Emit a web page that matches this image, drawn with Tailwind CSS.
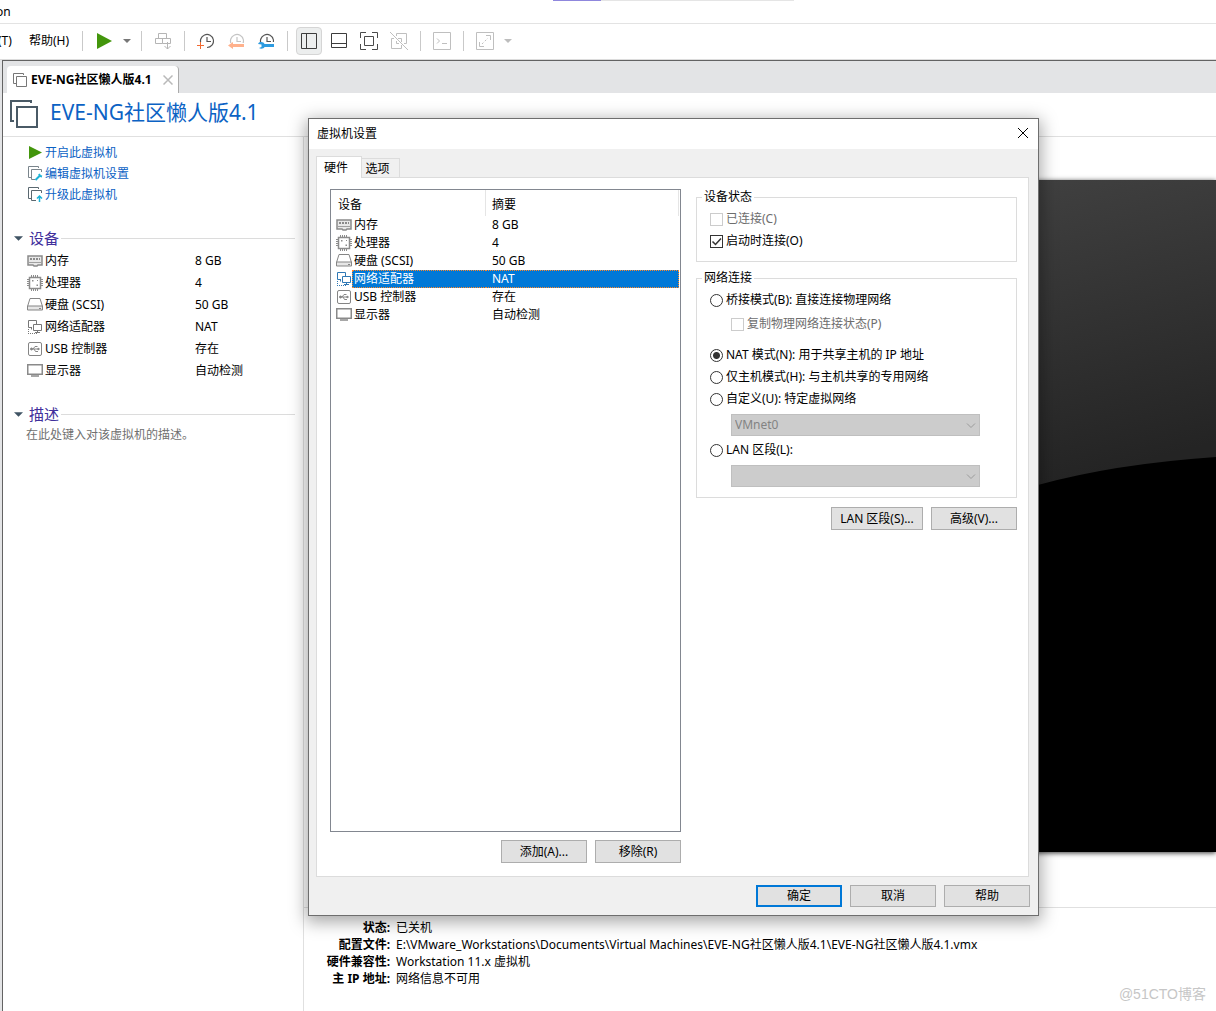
<!DOCTYPE html>
<html lang="zh-CN">
<head>
<meta charset="utf-8">
<title>虚拟机设置</title>
<script src="https://cdn.jsdelivr.net/npm/@tailwindcss/browser@4"></script>
</head>
<body class="bg-white font-['Noto_Sans','Noto_Sans_CJK_SC',sans-serif] text-[12px] leading-4 text-black">

<!-- Shared icons -->
<svg class="hidden" aria-hidden="true">
  <symbol id="memory" viewBox="0 0 16 16"><path d="M1 3h14v9h-4l-1 1H7l-1-1H1z" fill="#e8e8e8" stroke="#8a8a8a" stroke-width="1.5"/><path d="M3 5h2v2H3zM6 5h2v2H6zM9 5h2v2H9zM12 5h1v2h-1z" fill="#8a8a8a"/><path d="M2 9.500h12" stroke="#a0a0a0"/></symbol>
  <symbol id="cpu" viewBox="0 0 16 16"><path d="M4.500 0v16M6.500 0v16M8.500 0v16M10.500 0v16M0 4.500h16M0 6.500h16M0 8.500h16M0 10.500h16" stroke="#8c8c8c"/><rect x="2.500" y="2.500" width="11" height="11" fill="#fff" stroke="#8c8c8c" stroke-width="1.500"/><path d="M5 5h1.500v1.500H5zM9.500 9.500H11V11H9.500zM10 5h1v1h-1z" fill="#8c8c8c"/></symbol>
  <symbol id="disk" viewBox="0 0 16 16"><path d="M3 1.500h10l2.500 8v3H.5v-3z" fill="#fff" stroke="#858585"/><path d="M.5 9h15v4H.5z" fill="#e6e6e6" stroke="#858585"/><path d="M12 11.500h2" stroke="#858585"/></symbol>
  <symbol id="network" viewBox="0 0 16 16" fill="none" stroke="currentColor"><path d="M5 8.500H1.500v-7h8V5M4.500 10.500V8.500"/><path d="M6.500 5.500h8v6h-8zM10.500 11.500V13M8 13.500h5"/><path d="M1.500 10v5M1 14.500h9" stroke-dasharray="1 1"/></symbol>
  <symbol id="usb" viewBox="0 0 16 16" fill="none" stroke="#858585"><rect x="1.500" y="1.500" width="13" height="13" rx="1.500"/><path d="M4 8h8M6 8l2-2.500h2M7 8l1.500 2.500H10"/><circle cx="4.500" cy="8" r="1" fill="#858585"/><path d="M10.500 5.500h.5M10 10.500h1M11 7l1.500 1-1.500 1z"/></symbol>
  <symbol id="display" viewBox="0 0 16 16"><rect x=".75" y="1.750" width="14.500" height="9.500" fill="#fff" stroke="#8a8a8a" stroke-width="1.500"/><path d="M4 13h8" stroke="#8a8a8a" stroke-width="1.500"/></symbol>
  <symbol id="chevron" viewBox="0 0 10 6"><path d="M1 .5l4 4 4-4" fill="none" stroke="#9a9a9a"/></symbol>
  <symbol id="caret" viewBox="0 0 8 4"><path d="M0 0h8L4 4z" fill="currentColor"/></symbol>
  <symbol id="clock" viewBox="0 0 16 16"><path d="M3.500 11.500A6.500 6.500 0 1 1 9 14.500M9 4v4.500h4" fill="none" stroke="currentColor" stroke-width="1.200"/></symbol>
</svg>

<div class="relative flex min-h-screen flex-col overflow-hidden">
  <header class="flex h-6 items-center border-b border-[#e3e3e3]">
    <div class="absolute top-0 left-[553px] flex h-px w-[241px] bg-[#e5e5e5]"><div class="w-12 bg-[#8f87dd]"></div></div>
    <span class="-ml-1">on</span>
  </header>

  <nav class="flex h-9 items-center border-b border-[#dcdcdc] pb-0.5" aria-label="工具栏">
    <button class="-ml-0.5 w-[31px] text-left">(T)</button>
    <button class="w-[47px] text-left">帮助(H)</button>
    <div class="mx-1.5 h-5 w-px bg-[#c9c9c9]"></div>
    <button class="flex w-[30px] justify-center" aria-label="开启"><svg class="h-4 w-4" viewBox="0 0 16 16"><path d="M1 0l15 8-15 8z" fill="#43960c"/></svg></button>
    <button class="w-4 text-[#777]" aria-label="电源选项"><svg class="mx-auto h-1 w-2"><use href="#caret"/></svg></button>
    <div class="mx-1.5 h-5 w-px bg-[#c9c9c9]"></div>
    <button class="flex w-[30px] justify-center" aria-label="发送按键"><svg class="h-[18px] w-[18px]" viewBox="0 0 18 18" fill="none" stroke="#b5b5b5"><path d="M4.500 1.500h8v5h-8zM1.500 6.500h7v5h-7zM8.500 6.500h8v5h-8M13.500 10v7M10.500 14l3 3 3-3"/></svg></button>
    <div class="mx-1.5 h-5 w-px bg-[#c9c9c9]"></div>
    <button class="flex w-[30px] justify-center" aria-label="拍摄快照"><svg class="h-4 w-4 overflow-visible text-[#555]" viewBox="0 0 16 16"><use href="#clock" width="16" height="16"/><path d="M3.500 9v7M0 12.500h7" stroke="#fff" stroke-width="3"/><path d="M2.500 9v7M-1 12.500h7" stroke="#f26a32"/></svg></button>
    <button class="flex w-[30px] justify-center" aria-label="恢复快照"><svg class="h-4 w-4 text-[#c4c4c4]" viewBox="0 0 16 16"><use href="#clock" width="16" height="16"/><path d="M2 10h14v5H2z" fill="#fff"/><path d="M0 12.500L5 9v2h11v3H5v2z" fill="#ffb18c"/></svg></button>
    <button class="flex w-[30px] justify-center" aria-label="管理快照"><svg class="h-4 w-4 text-[#555]" viewBox="0 0 16 16"><use href="#clock" width="16" height="16"/><path d="M1 9h15v6H1z" fill="#fff"/><path d="M1 9.500c3-1 5 0 5.500 1.500H16v3H6.500C6 15.500 3 16.500 1 15l2.500-1v-2.500L0 11z" fill="#2d9be0"/></svg></button>
    <div class="mx-1.5 h-5 w-px bg-[#c9c9c9]"></div>
    <button class="flex w-[30px] justify-center" aria-label="显示库" aria-pressed="true"><span class="flex h-7 w-[26px] items-center justify-center rounded-sm border border-[#d5d5d5] bg-[#eceeee]"><svg class="h-4 w-4" viewBox="0 0 16 16" fill="none" stroke="#3c3c3c"><path d="M.5.5h15v15H.5zM5.500.5v15"/></svg></span></button>
    <button class="flex w-[30px] justify-center" aria-label="缩略图栏"><svg class="h-4 w-4" viewBox="0 0 16 16" fill="none" stroke="#3c3c3c"><path d="M.5.5h15v14H.5zM.5 10.500h15"/></svg></button>
    <button class="flex w-[30px] justify-center" aria-label="全屏"><svg class="h-[18px] w-[18px]" viewBox="0 0 18 18" fill="none" stroke="#4a4a4a"><path d="M.5 6V.5H6M12 .5h5.500V6M17.500 12v5.500H12M6 17.500H.5V12M4.500 4.500h9v9h-9z"/></svg></button>
    <button class="flex w-[30px] justify-center" aria-label="Unity"><svg class="h-[18px] w-[18px]" viewBox="0 0 18 18" fill="none" stroke="#bfbfbf"><path d="M6.500 4V1.500h10v10H14M4 6.500H1.500v10h10V13M8 6.500h3.500V10M6.500 9v2.500H9M0 0l18 18"/></svg></button>
    <div class="mx-1.5 h-5 w-px bg-[#c9c9c9]"></div>
    <button class="flex w-[30px] justify-center" aria-label="控制台"><svg class="h-[18px] w-[18px]" viewBox="0 0 18 18" fill="none" stroke="#bfbfbf"><path d="M.5.5h17v17H.5zM4 6.500L6.500 9 4 11.500M9 11.500h5"/></svg></button>
    <div class="mx-1.5 h-5 w-px bg-[#c9c9c9]"></div>
    <button class="flex w-[30px] justify-center" aria-label="拉伸"><svg class="h-[18px] w-[18px]" viewBox="0 0 18 18" fill="none" stroke="#bfbfbf"><path d="M.5.5h17v17H.5zM10 3.500h4.500V8M3.500 10v4.500H8"/><path d="M6 12l6-6" stroke-dasharray="2 2"/></svg></button>
    <button class="w-4 text-[#bdbdbd]" aria-label="拉伸选项"><svg class="mx-auto h-1 w-2"><use href="#caret"/></svg></button>
  </nav>

  <div class="flex flex-1 flex-col bg-[#e3e4e6] pl-0.5">
    <div class="flex flex-1 flex-col border-t border-l border-[#636363]">
      <div class="flex h-8 items-end pl-1">
        <div class="flex h-[27px] items-center rounded-t border-r border-[#ababab] bg-white pr-1 pl-1.5 font-bold">
          <svg class="mr-1 h-3.5 w-3.5" viewBox="0 0 14 14" fill="none" stroke="#777"><path d="M10.500 2V.5H.5v10H3M3.500 3.500h10v10h-10z"/></svg>
          <span class="w-[124px] whitespace-nowrap">EVE-NG社区懒人版4.1</span>
          <button class="ml-[7px] flex w-3 justify-center" aria-label="关闭标签"><svg class="h-2.5 w-2.5" viewBox="0 0 10 10" stroke="#b9b9b9" stroke-width="1.500"><path d="M.5.5l9 9M9.500.5l-9 9"/></svg></button>
        </div>
      </div>

      <div class="flex h-11 items-center border-b border-[#e0e0e0] bg-white pb-0.5 pl-[7px]">
        <svg class="mr-3 h-7 w-7" viewBox="0 0 28 28" fill="none" stroke="#4a5a66" stroke-width="2"><path d="M21 3V1H1v20h3M7 7h20v20H7z"/></svg>
        <h1 class="pb-1 text-[21px] leading-7 text-[#0b62c4]">EVE-NG社区懒人版4.1</h1>
      </div>

      <div class="flex flex-1 bg-white">
        <aside class="w-[301px] shrink-0 border-r border-[#e0e0e0] pt-[5px] pr-2">
          <ul class="pl-[25px] text-[#0b62c4]">
            <li><a href="#" class="flex h-[21px] items-center gap-0.5"><svg class="h-[15px] w-[15px]" viewBox="0 0 15 15"><path d="M1 1l13 6.500L1 14z" fill="#43960c"/></svg>开启此虚拟机</a></li>
            <li><a href="#" class="flex h-[21px] items-center gap-0.5"><svg class="h-[15px] w-[15px]" viewBox="0 0 15 15" fill="none" stroke="#7a858c"><path d="M10.500 2V.5H.5v11H3M13.500 6V3.500h-10v10H7"/><path d="M7.500 14l4.500-4.500M11 8l1 2 2 .5" stroke="#1db2d6" stroke-width="2"/></svg>编辑虚拟机设置</a></li>
            <li><a href="#" class="flex h-[21px] items-center gap-0.5"><svg class="h-[15px] w-[15px]" viewBox="0 0 15 15" fill="none" stroke="#5a6870"><path d="M10.500 2V.5H.5v11H3M13.500 6V3.500h-10v10H8"/><path d="M11.500 15v-5M9 11.500L11.500 9l2.500 2.500" stroke="#1db2d6" stroke-width="1.500"/></svg>升级此虚拟机</a></li>
          </ul>

          <h2 class="mt-[23px] flex h-5 items-center pl-[11px] text-[15px] text-[#41309c]"><svg class="mr-1.5 h-[5px] w-[9px] text-[#3f5363]"><use href="#caret"/></svg>设备<span class="ml-0.5 h-px flex-1 bg-[#dcdcdc]"></span></h2>
          <table class="mt-0.5 w-full table-fixed">
            <tbody>
              <tr class="h-[22px]"><td class="w-[192px] pl-6"><div class="flex items-center gap-0.5"><svg class="h-4 w-4"><use href="#memory"/></svg>内存</div></td><td>8 GB</td></tr>
              <tr class="h-[22px]"><td class="pl-6"><div class="flex items-center gap-0.5"><svg class="h-4 w-4"><use href="#cpu"/></svg>处理器</div></td><td>4</td></tr>
              <tr class="h-[22px]"><td class="pl-6"><div class="flex items-center gap-0.5"><svg class="h-4 w-4"><use href="#disk"/></svg>硬盘 (SCSI)</div></td><td>50 GB</td></tr>
              <tr class="h-[22px]"><td class="pl-6"><div class="flex items-center gap-0.5"><svg class="h-4 w-4 text-[#777]"><use href="#network"/></svg>网络适配器</div></td><td>NAT</td></tr>
              <tr class="h-[22px]"><td class="pl-6"><div class="flex items-center gap-0.5"><svg class="h-4 w-4"><use href="#usb"/></svg>USB 控制器</div></td><td>存在</td></tr>
              <tr class="h-[22px]"><td class="pl-6"><div class="flex items-center gap-0.5"><svg class="h-4 w-4"><use href="#display"/></svg>显示器</div></td><td>自动检测</td></tr>
            </tbody>
          </table>

          <h2 class="mt-[22px] flex h-5 items-center pl-[11px] text-[15px] text-[#41309c]"><svg class="mr-1.5 h-[5px] w-[9px] text-[#3f5363]"><use href="#caret"/></svg>描述<span class="ml-0.5 h-px flex-1 bg-[#dcdcdc]"></span></h2>
          <p class="mt-[3px] pl-[23px] text-[#707070]">在此处键入对该虚拟机的描述。</p>
        </aside>

        <main class="flex min-w-0 flex-1 flex-col pt-[43px]">
          <div class="relative mb-[55px] ml-10 flex-1 bg-black shadow-[0_1px_5px_rgba(0,0,0,0.8)]">
            <svg class="absolute inset-0 h-full w-full" viewBox="0 0 872 672" preserveAspectRatio="xMaxYMin slice">
              <defs><linearGradient id="screen" gradientUnits="userSpaceOnUse" x1="690" y1="0" x2="765" y2="290"><stop offset="0" stop-color="#404040"/><stop offset="1" stop-color="#242424"/></linearGradient></defs>
              <rect width="872" height="672" fill="url(#screen)"/>
              <path d="M0 672V560Q400 380 694 305Q770 284 872 277V672z" fill="#000"/>
            </svg>
          </div>
          <dl class="grid grid-cols-[86px_1fr] gap-x-1.5 border-t border-[#e0e0e0] pt-[11px] pb-6 leading-[17px]">
            <dt class="text-right font-bold">状态:</dt><dd>已关机</dd>
            <dt class="text-right font-bold">配置文件:</dt><dd>E:\VMware_Workstations\Documents\Virtual Machines\EVE-NG社区懒人版4.1\EVE-NG社区懒人版4.1.vmx</dd>
            <dt class="whitespace-nowrap text-right font-bold">硬件兼容性:</dt><dd>Workstation 11.x 虚拟机</dd>
            <dt class="text-right font-bold">主 IP 地址:</dt><dd>网络信息不可用</dd>
          </dl>
        </main>
      </div>
    </div>
  </div>

  <div class="absolute right-2.5 bottom-[9px] font-['Liberation_Sans','Noto_Sans_CJK_SC',sans-serif] text-[14px] text-[#c6c6c6]">@51CTO博客</div>

  <!-- Settings dialog -->
  <section role="dialog" aria-labelledby="dialog-title" class="absolute top-[118px] left-[308px] w-[731px] border border-[#6e6e6e] bg-[#f0f0f0] shadow-[0_4px_16px_2px_rgba(0,0,0,0.35)]">
    <div class="flex h-[30px] items-center justify-between bg-white pr-2.5 pb-0.5 pl-2">
      <h2 id="dialog-title" class="pt-0.5">虚拟机设置</h2>
      <button aria-label="关闭"><svg class="h-2.5 w-2.5" viewBox="0 0 10 10" stroke="#000"><path d="M0 0l10 10M10 0L0 10"/></svg></button>
    </div>

    <div class="pt-[7px] pr-2 pb-2 pl-[7px]">
      <div role="tablist" class="flex h-[21px] items-end">
        <button role="tab" aria-selected="true" class="z-10 -mb-px h-[22px] w-[46px] border border-b-0 border-[#dcdcdc] bg-white pr-1.5">硬件</button>
        <button role="tab" aria-selected="false" class="h-[19px] w-[38px] border border-b-0 border-l-0 border-[#dcdcdc] pt-0.5 pr-1.5 leading-4">选项</button>
      </div>

      <div class="mr-px flex justify-between border border-[#dcdcdc] bg-white pt-[11px] pr-[11px] pb-[13px] pl-[13px]">
        <div class="w-[351px]">
          <div class="min-h-[643px] border border-[#828790] px-px">
            <table class="w-full table-fixed border-separate border-spacing-0 text-left">
              <thead>
                <tr class="h-[26px]">
                  <th class="w-5 font-normal"></th>
                  <th class="w-[134px] border-r border-[#e5e5e5] pt-1 font-normal"><span class="-ml-3.5">设备</span></th>
                  <th class="border-r border-[#e5e5e5] pt-1 pl-1.5 font-normal">摘要</th>
                </tr>
              </thead>
              <tbody>
                <tr class="h-[18px]"><td class="pl-1"><svg class="h-4 w-4"><use href="#memory"/></svg></td><td class="pl-0.5">内存</td><td class="pl-1.5">8 GB</td></tr>
                <tr class="h-[18px]"><td class="pl-1"><svg class="h-4 w-4"><use href="#cpu"/></svg></td><td class="pl-0.5">处理器</td><td class="pl-1.5">4</td></tr>
                <tr class="h-[18px]"><td class="pl-1"><svg class="h-4 w-4"><use href="#disk"/></svg></td><td class="pl-0.5">硬盘 (SCSI)</td><td class="pl-1.5">50 GB</td></tr>
                <tr class="h-[18px] text-white" aria-selected="true"><td class="pl-1 text-[#2f78b5]"><svg class="h-4 w-4"><use href="#network"/></svg></td><td class="border-y border-l border-dotted border-[#ff8728] bg-[#0078d7] pl-px">网络适配器</td><td class="border-y border-r border-dotted border-[#ff8728] bg-[#0078d7] pl-1.5">NAT</td></tr>
                <tr class="h-[18px]"><td class="pl-1"><svg class="h-4 w-4"><use href="#usb"/></svg></td><td class="pl-0.5">USB 控制器</td><td class="pl-1.5">存在</td></tr>
                <tr class="h-[18px]"><td class="pl-1"><svg class="h-4 w-4"><use href="#display"/></svg></td><td class="pl-0.5">显示器</td><td class="pl-1.5">自动检测</td></tr>
              </tbody>
            </table>
          </div>
          <div class="mt-2 flex justify-end gap-2">
            <button class="h-[23px] w-[86px] border border-[#adadad] bg-[#e1e1e1]">添加(A)...</button>
            <button class="h-[23px] w-[86px] border border-[#adadad] bg-[#e1e1e1]">移除(R)</button>
          </div>
        </div>

        <div class="w-[321px]">
          <fieldset class="border border-[#dcdcdc] px-[13px] pt-[3px] pb-[9px]">
            <legend class="-ml-2 px-0.5">设备状态</legend>
            <label class="flex h-[22px] items-center gap-[3px] text-[#6d6d6d]"><input type="checkbox" disabled class="h-[13px] w-[13px] appearance-none border border-[#ccc] bg-white">已连接(C)</label>
            <label class="flex h-[22px] items-center gap-[3px]"><span class="grid"><input type="checkbox" checked class="col-start-1 row-start-1 h-[13px] w-[13px] appearance-none border border-[#333] bg-white"><svg class="pointer-events-none col-start-1 row-start-1 h-[13px] w-[13px]" viewBox="0 0 13 13" fill="none" stroke="#333" stroke-width="1.500"><path d="M2.500 6.500l3 3 5.500-6"/></svg></span>启动时连接(O)</label>
          </fieldset>

          <fieldset class="mt-2 border border-[#dcdcdc] px-[13px] pt-[3px] pb-2.5">
            <legend class="-ml-2 px-0.5">网络连接</legend>
            <label class="flex h-[22px] items-center gap-[3px]"><input type="radio" name="net" class="h-[13px] w-[13px] appearance-none rounded-full border border-[#333] bg-white">桥接模式(B): 直接连接物理网络</label>
            <label class="mt-0.5 ml-[21px] flex h-[22px] items-center gap-[3px] text-[#6d6d6d]"><input type="checkbox" disabled class="h-[13px] w-[13px] appearance-none border border-[#ccc] bg-white">复制物理网络连接状态(P)</label>
            <label class="mt-[9px] flex h-[22px] items-center gap-[3px]"><input type="radio" name="net" checked class="h-[13px] w-[13px] appearance-none rounded-full border border-[#333] bg-white bg-[radial-gradient(circle,#333_3px,transparent_4px)]">NAT 模式(N): 用于共享主机的 IP 地址</label>
            <label class="flex h-[22px] items-center gap-[3px]"><input type="radio" name="net" class="h-[13px] w-[13px] appearance-none rounded-full border border-[#333] bg-white">仅主机模式(H): 与主机共享的专用网络</label>
            <label class="flex h-[22px] items-center gap-[3px]"><input type="radio" name="net" class="h-[13px] w-[13px] appearance-none rounded-full border border-[#333] bg-white">自定义(U): 特定虚拟网络</label>
            <div class="relative mt-1 ml-[21px] w-[249px]"><select disabled aria-label="特定虚拟网络" class="block h-[22px] w-full appearance-none border border-[#bfbfbf] bg-[#ccc] pl-[3px] text-[#838383]"><option>VMnet0</option></select><svg class="pointer-events-none absolute top-[9px] right-1 h-1.5 w-2.5"><use href="#chevron"/></svg></div>
            <label class="mt-[3px] flex h-[22px] items-center gap-[3px]"><input type="radio" name="net" class="h-[13px] w-[13px] appearance-none rounded-full border border-[#333] bg-white">LAN 区段(L):</label>
            <div class="relative mt-1 ml-[21px] w-[249px]"><select disabled aria-label="LAN 区段" class="block h-[22px] w-full appearance-none border border-[#bfbfbf] bg-[#ccc] pl-[3px] text-[#838383]"><option></option></select><svg class="pointer-events-none absolute top-[9px] right-1 h-1.5 w-2.5"><use href="#chevron"/></svg></div>
          </fieldset>

          <div class="mt-[9px] flex justify-end gap-2">
            <button class="h-[23px] w-[92px] border border-[#adadad] bg-[#e1e1e1]">LAN 区段(S)...</button>
            <button class="h-[23px] w-[86px] border border-[#adadad] bg-[#e1e1e1]">高级(V)...</button>
          </div>
        </div>
      </div>

      <div class="mt-2 flex justify-end gap-2">
        <button class="h-[22px] w-[86px] border-2 border-[#0078d7] bg-[#e1e1e1]">确定</button>
        <button class="h-[22px] w-[86px] border border-[#adadad] bg-[#e1e1e1]">取消</button>
        <button class="h-[22px] w-[86px] border border-[#adadad] bg-[#e1e1e1]">帮助</button>
      </div>
    </div>
  </section>
</div>
</body>
</html>
